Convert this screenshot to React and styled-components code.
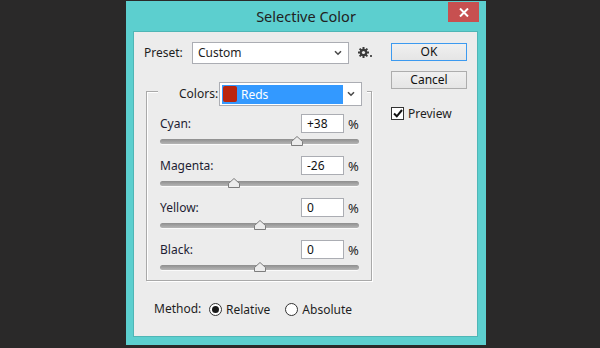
import React from "react";
import styled, { createGlobalStyle } from "styled-components";

const Global = createGlobalStyle`
  html, body { margin: 0; padding: 0; }
  body {
    width: 600px; height: 348px; overflow: hidden;
    background: #2a2929;
    font-family: "Noto Sans", "Open Sans", sans-serif;
    font-size: 12px;
    color: #1e1e1e;
  }
  * { box-sizing: border-box; }
`;

const Stage = styled.div`
  width: 600px;
  height: 348px;
  padding: 1px 0 0 126px;
`;

const Window = styled.div`
  width: 360px;
  height: 344px;
  background: #5ccfcf;
  display: flex;
  flex-direction: column;
`;

const TitleBar = styled.div`
  height: 30px;
  display: grid;
  grid-template-columns: 1fr auto 1fr;
  align-items: center;
`;

const Title = styled.div`
  grid-column: 2;
  font-size: 14.5px;
  color: #222;
  line-height: 30px;
`;

const CloseButton = styled.div`
  grid-column: 3;
  justify-self: end;
  align-self: start;
  margin: 1px 7px 0 0;
  width: 31px;
  height: 20px;
  background: #c75050;
  display: flex;
  align-items: center;
  justify-content: center;
`;

const Client = styled.div`
  margin: 0 8px 8px 7px;
  height: 306px;
  background: #ececec;
  border: 1px solid #4fb6b6;
  padding: 10px 0 0 10px;
  display: flex;
`;

const LeftCol = styled.div`
  width: 240px;
  display: flex;
  flex-direction: column;
`;

const RightCol = styled.div`
  margin-left: 7px;
  padding-top: 1px;
  display: flex;
  flex-direction: column;
`;

const PresetRow = styled.div`
  height: 22px;
  display: flex;
  align-items: center;
`;

const Label = styled.div`
  width: ${(p) => p.$w}px;
  flex: none;
  white-space: nowrap;
  line-height: 16px;
`;

const Select = styled.div`
  width: ${(p) => p.$w}px;
  height: ${(p) => p.$h}px;
  background: #fff;
  border: 1px solid #abadb3;
  display: flex;
  align-items: center;
  padding: 0 6px 0 ${(p) => (p.$highlight ? 2 : 5)}px;
`;

const SelectText = styled.div`
  flex: 1;
  line-height: 16px;
`;

const Highlight = styled.div`
  flex: none;
  width: 121px;
  height: 19px;
  background: #3399ff;
  color: #fff;
  display: flex;
  align-items: center;
  padding-left: 1px;
  gap: 4px;
  margin-right: auto;
`;

const Swatch = styled.div`
  width: 14px;
  height: 16px;
  background: #bb250c;
  border-radius: 2px;
`;

const GearWrap = styled.div`
  margin-left: 9px;
  display: flex;
  align-items: center;
`;

const GroupBox = styled.div`
  margin: 27px 0 0 2px;
  width: 226px;
  border: 1px solid #a9a9a9;
  box-shadow: inset 1px 1px 0 #fff, 1px 1px 0 #fff;
  padding: 0 0 7px 13px;
  display: flex;
  flex-direction: column;
`;

const Legend = styled.div`
  margin: -10px 0 0 -2px;
  align-self: flex-start;
  height: 24px;
  background: #ececec;
  display: flex;
  align-items: center;
  padding: 0 5px 0 21px;
`;

const AdjustRow = styled.div`
  margin-top: ${(p) => p.$top}px;
  display: flex;
  flex-direction: column;
  width: 200px;
`;

const ValueLine = styled.div`
  height: 19px;
  display: flex;
  align-items: center;
`;

const RowLabel = styled.div`
  flex: 1;
  line-height: 16px;
  color: #1d1d33;
`;

const ValueBox = styled.div`
  width: 43px;
  height: 19px;
  background: #fff;
  border: 1px solid #abadb3;
  padding-left: 5px;
  line-height: 17px;
  color: #111;
`;

const Percent = styled.div`
  width: 12px;
  margin-left: 4px;
  line-height: 16px;
  font-size: 13px;
`;

const Slider = styled.div`
  position: relative;
  margin-top: 2px;
  height: 12px;
  width: 199px;
`;

const Track = styled.div`
  position: absolute;
  left: 0;
  right: 0;
  top: 4px;
  height: 5px;
  border-radius: 3px;
  background: linear-gradient(#8e8e8e, #b5b5b5);
  box-shadow: 0 1px 0 #fafafa;
`;

const Thumb = styled.svg`
  position: absolute;
  top: 1px;
`;

const MethodRow = styled.div`
  margin-top: 20px;
  padding-left: 10px;
  height: 16px;
  display: flex;
  align-items: center;
`;

const RadioItem = styled.div`
  display: flex;
  align-items: center;
  gap: 4px;
  margin-left: ${(p) => p.$ml}px;
`;

const RadioCircle = styled.div`
  width: 13px;
  height: 13px;
  border-radius: 50%;
  border: 1px solid #333;
  background: #fff;
  display: flex;
  align-items: center;
  justify-content: center;
  &::after {
    content: "";
    width: 7px;
    height: 7px;
    border-radius: 50%;
    background: ${(p) => (p.$on ? "#1a1a1a" : "transparent")};
  }
`;

const Button = styled.div`
  width: 76px;
  height: 18px;
  margin-bottom: 10px;
  border: 1px solid ${(p) => (p.$primary ? "#3c9af0" : "#adadad")};
  background: linear-gradient(#f0f0f0, #e5e5e5);
  display: flex;
  align-items: center;
  justify-content: center;
  line-height: 16px;
  color: #111;
`;

const CheckRow = styled.div`
  margin-top: 6px;
  display: flex;
  align-items: center;
  gap: 4px;
`;

const CheckBox = styled.div`
  width: 13px;
  height: 13px;
  border: 1px solid #333;
  background: #fff;
  display: flex;
  align-items: center;
  justify-content: center;
`;

const Chevron = () => (
  <svg width="8" height="6" viewBox="0 0 8 6">
    <polyline points="1,1.2 4,4.2 7,1.2" fill="none" stroke="#4a4a4a" strokeWidth="1.6" />
  </svg>
);

const Gear = () => {
  const teeth = [];
  for (let i = 0; i < 4; i++) {
    teeth.push(
      <rect key={i} x="4.5" y="0" width="2" height="11" fill="#3a3a3a" transform={`rotate(${i * 45} 5.5 5.5)`} />
    );
  }
  return (
    <svg width="15" height="12" viewBox="0 0 15 12">
      {teeth}
      <circle cx="5.5" cy="5.5" r="3.8" fill="#3a3a3a" />
      <circle cx="5.5" cy="5.5" r="1.6" fill="#ececec" />
      <rect x="12" y="8" width="2" height="2" fill="#555" />
    </svg>
  );
};

const rows = [
  { name: "Cyan:", value: "+38", v: 38 },
  { name: "Magenta:", value: "-26", v: -26 },
  { name: "Yellow:", value: "0", v: 0 },
  { name: "Black:", value: "0", v: 0 },
];

export default function App() {
  return (
    <>
      <Global />
      <Stage>
        <Window>
          <TitleBar>
            <Title>Selective Color</Title>
            <CloseButton>
              <svg width="10" height="9" viewBox="0 0 10 9">
                <path d="M1 0.5 L9 8.5 M9 0.5 L1 8.5" stroke="#fff" strokeWidth="2" />
              </svg>
            </CloseButton>
          </TitleBar>
          <Client>
            <LeftCol>
              <PresetRow>
                <Label $w={48}>Preset:</Label>
                <Select $w={157} $h={22}>
                  <SelectText>Custom</SelectText>
                  <Chevron />
                </Select>
                <GearWrap>
                  <Gear />
                </GearWrap>
              </PresetRow>
              <GroupBox>
                <Legend>
                  <Label $w={40}>Colors:</Label>
                  <Select $w={143} $h={24} $highlight>
                    <Highlight>
                      <Swatch />
                      <span>Reds</span>
                    </Highlight>
                    <Chevron />
                  </Select>
                </Legend>
                {rows.map((r, i) => (
                  <AdjustRow key={r.name} $top={i === 0 ? 8 : 9}>
                    <ValueLine>
                      <RowLabel>{r.name}</RowLabel>
                      <ValueBox>{r.value}</ValueBox>
                      <Percent>%</Percent>
                    </ValueLine>
                    <Slider>
                      <Track />
                      <Thumb
                        width="12"
                        height="10"
                        viewBox="0 0 12 10"
                        style={{ left: `${((r.v + 100) / 200) * 199 - 6}px` }}
                      >
                        <polygon points="0.5,9.5 0.5,5.5 6,0.5 11.5,5.5 11.5,9.5" fill="#ececec" stroke="#7d7d7d" />
                      </Thumb>
                    </Slider>
                  </AdjustRow>
                ))}
              </GroupBox>
              <MethodRow>
                <Label $w={55}>Method:</Label>
                <RadioItem $ml={0}>
                  <RadioCircle $on />
                  <span>Relative</span>
                </RadioItem>
                <RadioItem $ml={15}>
                  <RadioCircle />
                  <span>Absolute</span>
                </RadioItem>
              </MethodRow>
            </LeftCol>
            <RightCol>
              <Button $primary>OK</Button>
              <Button>Cancel</Button>
              <CheckRow>
                <CheckBox>
                  <svg width="10" height="9" viewBox="0 0 10 9">
                    <polyline points="1,4.5 3.8,7.3 9,1" fill="none" stroke="#111" strokeWidth="2" />
                  </svg>
                </CheckBox>
                <span>Preview</span>
              </CheckRow>
            </RightCol>
          </Client>
        </Window>
      </Stage>
    </>
  );
}
